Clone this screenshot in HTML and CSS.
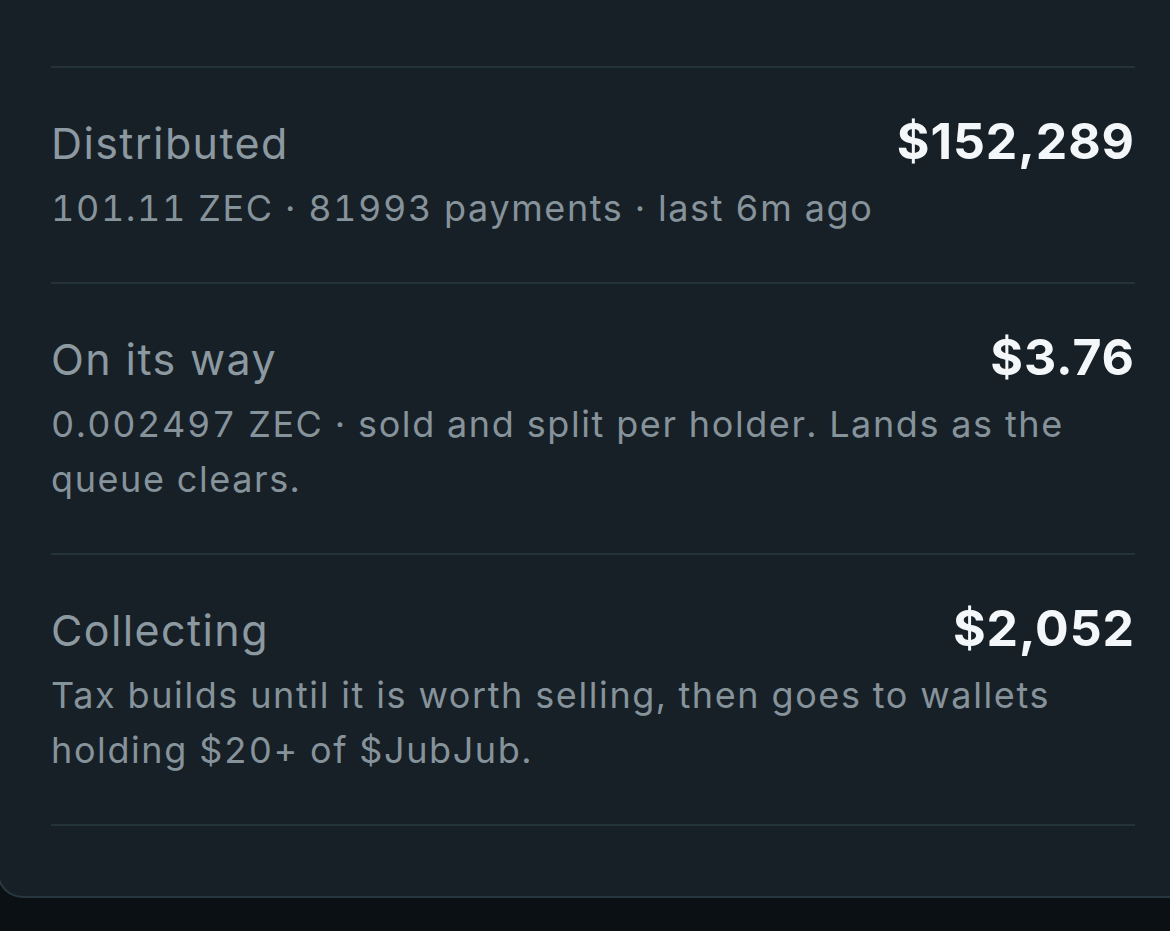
FILE: index.html
```html
<!DOCTYPE html>
<html>
<head>
<meta charset="utf-8">
<link rel="stylesheet" href="styles.css">
</head>
<body>
<div class="card">
  <div class="row">
    <div class="head">
      <span class="label">Distributed</span>
      <span class="value">$152,289</span>
    </div>
    <div class="sub">101.11 ZEC · 81993 payments · last 6m ago</div>
  </div>
  <div class="row">
    <div class="head">
      <span class="label">On its way</span>
      <span class="value">$3.76</span>
    </div>
    <div class="sub">0.002497 ZEC · sold and split per holder. Lands as the queue clears.</div>
  </div>
  <div class="row">
    <div class="head">
      <span class="label">Collecting</span>
      <span class="value">$2,052</span>
    </div>
    <div class="sub">Tax builds until it is worth selling, then goes to wallets holding $20+ of $JubJub.</div>
  </div>
  <div class="end"></div>
</div>
</body>
</html>
```
FILE: styles.css
```css
html, body {
  margin: 0;
  padding: 0;
  background: #0a1014;
  height: 100%;
}
body {
  font-family: "Inter", "Open Sans", sans-serif;
  overflow: hidden;
}
.card {
  box-sizing: border-box;
  width: calc(100% + 4px);
  margin-left: -3px;
  height: 898px;
  background: #172027;
  border-bottom: 2px solid #28373f;
  border-left: 2px solid #28373f;
  border-bottom-left-radius: 26px;
  padding: 66px 36px 0 52px;
}
.row {
  border-top: 2px solid #243239;
  padding: 41px 0 46px;
}
.end {
  border-top: 2px solid #243239;
}
.head {
  display: flex;
  justify-content: space-between;
  align-items: baseline;
  line-height: 64px;
}
.label {
  font-size: 43px;
  letter-spacing: 1.4px;
  color: #8c99a1;
}
.value {
  font-size: 50px;
  font-weight: 700;
  letter-spacing: 0.9px;
  color: #f4f7f9;
}
.sub {
  font-size: 36px;
  line-height: 55px;
  letter-spacing: 1.6px;
  font-variant-numeric: tabular-nums;
  color: #86939b;
  margin-top: 6px;
}
```
